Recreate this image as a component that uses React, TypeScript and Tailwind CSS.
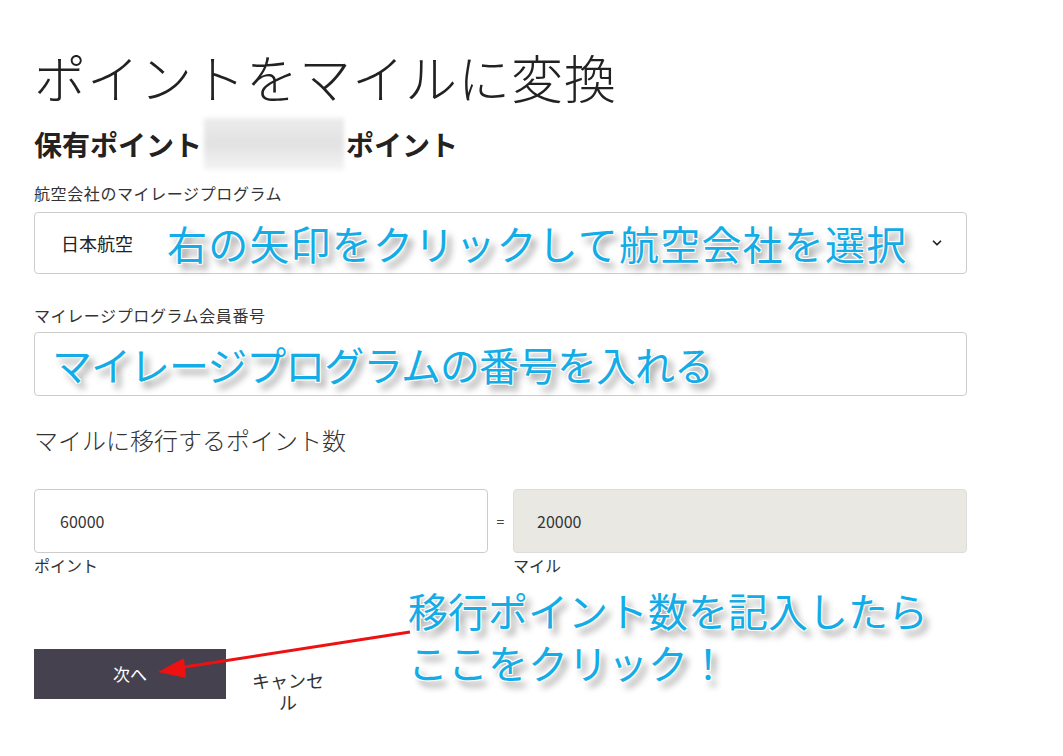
import { ChevronDown } from "lucide-react";

const jp = "font-['Noto_Sans_CJK_JP',sans-serif]";
const note =
  "text-[#13ace6] text-[40px] font-normal whitespace-nowrap [text-shadow:1px_1px_0_#fff,-1px_-1px_0_#fff,1px_-1px_0_#fff,-1px_1px_0_#fff,5px_6px_7px_rgba(0,0,0,0.45)]";

export default function App() {
  return (
    <div className={`relative w-[1063px] h-[756px] bg-white text-[#222] px-[34px] ${jp}`}>
      {/* title */}
      <h1 className="pt-[46px] text-[52px] leading-[62px] font-light tracking-[1px]">
        ポイントをマイルに変換
      </h1>

      {/* held points */}
      <div className="mt-[10px] flex items-center h-[52px] text-[28px] font-bold">
        <span>保有ポイント</span>
        <span className="mx-[2px] w-[140px] h-[52px] bg-gradient-to-b from-[#ececec] via-[#e2e2e2] to-[#f4f4f4] blur-[2px]" />
        <span>ポイント</span>
      </div>

      {/* airline */}
      <label className="block mt-[13px] text-[16px] tracking-[0.6px] leading-[20px] text-[#333]">
        航空会社のマイレージプログラム
      </label>
      <div className="mt-[9px] w-[933px] h-[62px] border border-[#ccc] rounded-[4px] flex items-center pl-[26px] pr-[22px]">
        <span className="text-[18px]">日本航空</span>
        <span className={`ml-[34px] leading-[48px] tracking-[1.2px] ${note}`}>
          右の矢印をクリックして航空会社を選択
        </span>
        <ChevronDown className="ml-auto" size={14} strokeWidth={3} />
      </div>

      {/* member number */}
      <label className="block mt-[31px] text-[16px] tracking-[0.6px] leading-[20px] text-[#333]">
        マイレージプログラム会員番号
      </label>
      <div className="mt-[7px] w-[933px] h-[64px] border border-[#ccc] rounded-[4px] flex items-center pl-[17px]">
        <span className={`leading-[48px] tracking-[-1px] ${note}`}>マイレージプログラムの番号を入れる</span>
      </div>

      {/* points to convert */}
      <h2 className="mt-[29px] text-[24px] leading-[30px] font-light text-[#333]">
        マイルに移行するポイント数
      </h2>
      <div className="mt-[34px] flex items-center">
        <div className="w-[454px] h-[64px] border border-[#ccc] rounded-[4px] flex items-center pl-[25px] text-[16px] text-[#333]">
          60000
        </div>
        <span className="w-[25px] text-center text-[14px] text-[#444]">=</span>
        <div className="w-[454px] h-[64px] border border-[#ddd] bg-[#e9e8e3] rounded-[4px] flex items-center pl-[23px] text-[16px] text-[#333]">
          20000
        </div>
      </div>
      <div className="mt-[2px] flex text-[16px] leading-[20px] text-[#333]">
        <span className="w-[479px]">ポイント</span>
        <span>マイル</span>
      </div>

      {/* actions */}
      <div className="mt-[74px] flex items-start">
        <button className="w-[192px] h-[50px] bg-[#45414f] text-white text-[17px]">次へ</button>
        <span className="ml-[22px] mt-[20px] w-[80px] text-center text-[18px] leading-[22px] text-[#333]">
          キャンセル
        </span>
      </div>

      {/* overlay annotation */}
      <div className={`absolute left-[408px] top-[584px] leading-[52px] ${note}`}>
        <div>移行ポイント数を記入したら</div>
        <div>ここをクリック！</div>
      </div>
      <svg className="absolute left-0 top-0 pointer-events-none" width="1063" height="756">
        <line x1="410" y1="632" x2="178" y2="668" stroke="#ee1111" strokeWidth="3" />
        <polygon points="158,672 184,658 186,678" fill="#ee1111" />
      </svg>
    </div>
  );
}
